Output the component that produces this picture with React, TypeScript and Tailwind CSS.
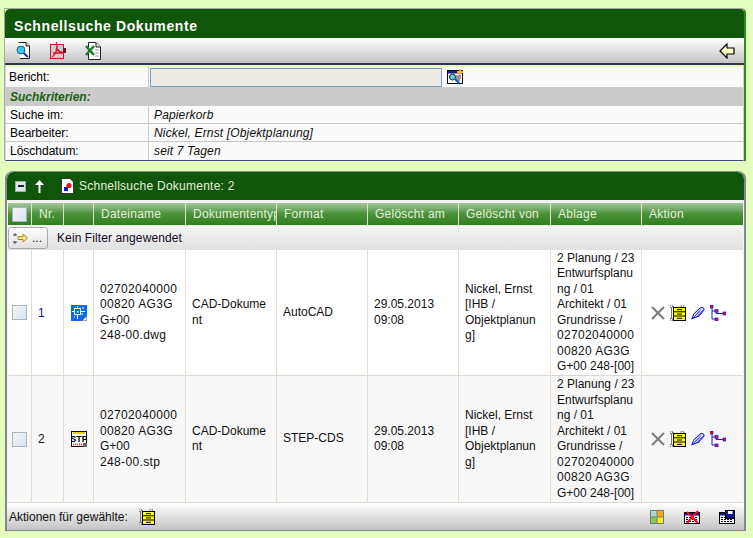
import React from "react";

const gridCols =
  "grid grid-cols-[24px_32px_30px_92px_91px_91px_91px_92px_91px_101px]";

const IconSearchDoc = () => (
  <svg width="17" height="17" viewBox="0 0 17 17">
    <path d="M3.5 .5H11L14.5 4V16.5H5" fill="#fff" stroke="#222" />
    <path d="M11 .5V4H14.5" fill="#ddd" stroke="#222" />
    <circle cx="6" cy="8" r="4" fill="#3cc8e8" stroke="#1a5ea8" />
    <path d="M8.5 11L13 15" stroke="#1a3aa8" strokeWidth="2" />
  </svg>
);

const IconPdf = () => (
  <svg width="17" height="17" viewBox="0 0 17 17">
    <rect x=".5" y="2.5" width="13" height="14" fill="#d9c8c8" stroke="#c8162a" />
    <path d="M6.5 0V2M7 3C7 9 5 13 2 15M7 7C9 10 12 11 15 10M3 11H13" fill="none" stroke="#e01030" strokeWidth="1.4" />
    <rect x="13" y="6" width="3" height="5" fill="#7a1020" />
  </svg>
);

const IconExcel = () => (
  <svg width="17" height="18" viewBox="0 0 17 18">
    <path d="M3.5 .5H11L15.5 5V17.5H3.5Z" fill="#fff" stroke="#222" />
    <path d="M11 .5V5H15.5" fill="#ddd" stroke="#222" />
    <path d="M1 4L9 13M9 4L1 13" stroke="#1f7a2e" strokeWidth="2.6" />
    <path d="M10 8H14M10 11H14M10 14H14" stroke="#999" />
  </svg>
);

const IconBack = () => (
  <svg width="16" height="16" viewBox="0 0 16 16">
    <path d="M1 8L8 1V5H15V11H8V15Z" fill="#ffffc8" stroke="#000" strokeWidth="1.2" />
  </svg>
);

const IconReportSearch = () => (
  <svg width="17" height="16" viewBox="0 0 17 16">
    <rect x=".5" y="1.5" width="15" height="13" fill="#fff" stroke="#111" />
    <rect x="1" y="2" width="14" height="2.5" fill="#1a1a9a" />
    <path d="M9 7H14M9 9H14M9 11H13" stroke="#333" />
    <circle cx="5.5" cy="8" r="3" fill="#58d8e8" stroke="#222" />
    <path d="M8 10L13 15" stroke="#1a56c8" strokeWidth="2" />
    <path d="M13 0V6M10 3H16" stroke="#f5b51e" strokeWidth="2" />
  </svg>
);

const IconDocSmall = () => (
  <svg width="13" height="16" viewBox="0 0 13 16">
    <path d="M.5 .5H9L12.5 4V15.5H.5Z" fill="#fff" stroke="#333" />
    <rect x="3" y="9" width="4" height="4" fill="#1212d8" />
    <circle cx="8" cy="7.5" r="2.6" fill="#e01818" />
  </svg>
);

const IconFilterArrows = () => (
  <svg width="15" height="11" viewBox="0 0 15 11">
    <path d="M0 2H4M0 9H4M2 0V3M2 8V11" stroke="#445" />
    <path d="M5 3.5H10V1L14.5 5L10 9V6.500H5Z" fill="#f8e8a0" stroke="#c08410" />
  </svg>
);

const IconCad = () => (
  <svg width="16" height="16" viewBox="0 0 16 16">
    <rect width="16" height="16" fill="#0a6af0" />
    <path d="M1 6.500H14M6.500 1V14" stroke="#fff" />
    <rect x="3.500" y="3.500" width="6" height="6" fill="#0a6af0" stroke="#fff" />
    <rect x="6" y="6" width="1.500" height="1.500" fill="#fff" />
    <path d="M11 3H13M3 12H4M11 8V10" stroke="#fff" />
    <path d="M10.500 16L16 10.500V16Z" fill="#fff" stroke="#555" />
  </svg>
);

const IconStp = () => (
  <svg width="16" height="16" viewBox="0 0 16 16">
    <rect x=".5" y=".5" width="15" height="15" fill="#fff" stroke="#111" />
    <path d="M2 2H14" stroke="#e8d020" strokeWidth="2" />
    <text x="8" y="11" textAnchor="middle" fontSize="9" fontWeight="bold" fontFamily="Liberation Sans" fill="#000">
      STP
    </text>
    <path d="M2 13.500H11" stroke="#e83020" strokeWidth="2" strokeDasharray="1 1" />
    <rect x="12" y="12" width="4" height="4" fill="#666" />
  </svg>
);

const IconDelete = () => (
  <svg width="14" height="14" viewBox="0 0 14 14">
    <path d="M1 1L13 13M13 1L1 13" stroke="#808080" strokeWidth="2.2" />
  </svg>
);

const IconArchive = () => (
  <svg width="16" height="16" viewBox="0 0 16 16">
    <path d="M1.500 1.500V15M1.500 1.500H4M1.500 14.500H4M11 1.500H13" stroke="#777" fill="none" />
    <rect x="0" y="0" width="2.500" height="2.500" fill="#fff" stroke="#777" strokeWidth=".8" />
    <rect x="0" y="13.500" width="2.500" height="2.500" fill="#fff" stroke="#777" strokeWidth=".8" />
    <rect x="11" y="0" width="2.500" height="2.500" fill="#fff" stroke="#777" strokeWidth=".8" />
    <rect x="3.500" y="2.500" width="12" height="13" fill="#ffff30" stroke="#000" />
    <path d="M3.500 6.800H15.500M3.500 11H15.500M7 4.700H12M7 9H12M7 13.300H12" stroke="#000" />
  </svg>
);

const IconEdit = () => (
  <svg width="14" height="14" viewBox="0 0 15 14">
    <path d="M1 13L3 8L10 1.500C12 .5 14 1.500 14 3.500L8 10.500Z" fill="#fff" stroke="#1212d8" strokeWidth="1.1" />
    <path d="M1 13L10 5M4 10L11 3M6 11L13 4" stroke="#1212d8" strokeWidth=".8" />
  </svg>
);

const IconTree = () => (
  <svg width="16" height="16" viewBox="0 0 16 16">
    <path d="M2 2V14H6M2 6H6M6 8.500H13" fill="none" stroke="#1a1ae0" strokeWidth="1" />
    <rect x="0" y="0" width="3" height="3" fill="#e01030" stroke="#1a1ae0" strokeWidth=".7" />
    <rect x="5" y="4.500" width="3" height="3" fill="#e01030" stroke="#1a1ae0" strokeWidth=".7" />
    <rect x="13" y="7" width="3" height="3" fill="#e01030" stroke="#1a1ae0" strokeWidth=".7" />
    <rect x="5" y="13" width="3" height="3" fill="#e01030" stroke="#1a1ae0" strokeWidth=".7" />
  </svg>
);

const IconColors = () => (
  <svg width="14" height="14" viewBox="0 0 14 14">
    <rect width="14" height="14" fill="#6f7f70" />
    <rect x="1" y="1" width="5.500" height="5.500" fill="#a9d8d8" />
    <rect x="7.500" y="1" width="5.500" height="5.500" fill="#f5a810" />
    <rect x="1" y="7.500" width="5.500" height="5.500" fill="#8cc850" />
    <rect x="7.500" y="7.500" width="5.500" height="5.500" fill="#ffee10" />
  </svg>
);

const IconTableBase = () => (
  <>
    <rect x=".5" y="2.500" width="15" height="11" fill="#fff" stroke="#000" />
    <rect x="1" y="3" width="14" height="2.500" fill="#10108a" />
    <path d="M2 7.500H14M2 9.500H14M2 11.500H14" stroke="#000" strokeDasharray="2 1" />
  </>
);

const IconTableOff = () => (
  <svg width="16" height="14" viewBox="0 0 16 14">
    <IconTableBase />
    <path d="M3 13L14 1M3 2L14 13" stroke="#f01020" strokeWidth="2" />
  </svg>
);

const IconTableSave = () => (
  <svg width="16" height="14" viewBox="0 0 16 14">
    <IconTableBase />
    <rect x="6.500" y=".5" width="9" height="8" fill="#10108a" stroke="#000" />
    <rect x="9" y="1" width="4.500" height="3" fill="#fff" />
  </svg>
);

const Checkbox = () => (
  <span className="block h-[15px] w-[15px] border border-[#aeb4bc] bg-gradient-to-br from-[#f4f6f8] to-[#d6e2f0]" />
);

const FormRow = ({ label, value }: { label: string; value: string }) => (
  <div className="flex h-[18px] items-center border-b border-[#c8c8c8] last:border-b-0 bg-[#fafafa]">
    <div className="flex h-full w-[143px] items-center border-r border-[#c8c8c8] pl-[4px] text-black">
      {label}
    </div>
    <div className="pl-[5px] italic tracking-[.15px] text-[#111]">{value}</div>
  </div>
);

const HeaderCell = ({ children }: { children?: React.ReactNode }) => (
  <div className="flex items-center overflow-hidden whitespace-nowrap border-r border-[#e4dcc8] pl-[7px] tracking-[.25px] text-[#e4efdc] last:border-r-0">
    {children}
  </div>
);

const Cell = ({ children }: { children?: React.ReactNode }) => (
  <div className="flex items-center border-r border-[#e6dccf] pl-[6px] pr-[2px] text-[#111] last:border-r-0">
    <div className="min-w-0 leading-[15.5px]">{children}</div>
  </div>
);

// digit runs are a bit wider in the original
const Digits = ({ children }: { children: React.ReactNode }) => (
  <span className="tracking-[.35px]">{children}</span>
);

type DocRow = {
  nr: number;
  icon: React.ReactNode;
  file: string;
  format: string;
  striped: boolean;
  nrColor: string;
  height: string;
};

const rows: DocRow[] = [
  { nr: 1, icon: <IconCad />, file: "248-00.dwg", format: "AutoCAD", striped: false, nrColor: "text-[#10106a]", height: "h-[126px]" },
  { nr: 2, icon: <IconStp />, file: "248-00.stp", format: "STEP-CDS", striped: true, nrColor: "text-[#111]", height: "h-[127px]" },
];

export default function App() {
  return (
    <div className="h-[538px] w-[753px] overflow-hidden bg-[#e3fdbe] pl-[5px] pt-[9px] text-[12px] font-['Liberation_Sans',Arial,sans-serif]">
      <div className="w-[741px] rounded-tr-[4px] border-r-[2px] border-[#2f8a14] shadow-[-1px_-1px_0_#a9a9a0]">
        <div className="flex h-[29px] items-center rounded-tl-[5px] rounded-tr-[4px] bg-[#10560a] pl-[9px] pt-[5px] text-[14px] font-bold tracking-[.6px] text-white">
          Schnellsuche Dokumente
        </div>
        <div className="flex h-[27px] items-center gap-[18px] border-b-[2px] border-[#33334a] bg-gradient-to-b from-white to-[#c4c4c4] pl-[10px] pr-[9px]">
          <IconSearchDoc />
          <IconPdf />
          <IconExcel />
          <div className="ml-auto">
            <IconBack />
          </div>
        </div>
        <div className="border-x border-b border-[#d0d0d8] border-b-[#3c4a80] pt-[2px]">
          <div className="flex h-[20px] items-center bg-[#fafafa]">
            <div className="flex h-full w-[143px] items-center border-r border-[#c8c8c8] pl-[3px]">
              Bericht:
            </div>
            <div className="ml-px h-[19px] w-[292px] border border-[#7c9fc4] bg-[#ecece4]" />
            <div className="ml-[5px]">
              <IconReportSearch />
            </div>
          </div>
          <div className="flex h-[19px] items-center bg-[#cbcbcb] pl-[4px] font-bold italic text-[#1c6014]">
            Suchkriterien:
          </div>
          <FormRow label="Suche im:" value="Papierkorb" />
          <FormRow label="Bearbeiter:" value="Nickel, Ernst [Objektplanung]" />
          <FormRow label="Löschdatum:" value="seit 7 Tagen" />
        </div>
      </div>

      <div className="mt-[11px] w-[741px] rounded-t-[8px] border-b border-r-[2px] border-l-[2px] border-[#84888a] bg-[#f2f2f2] shadow-[0_-1px_0_#8a8f86]">
        <div className="flex h-[28px] items-center rounded-t-[7px] bg-[#10560a] pl-[8px] text-[#e4efdc]">
          <span className="flex h-[11px] w-[11px] items-center justify-center border border-[#9ab0a0] bg-[#e0e8f0]">
            <span className="h-[1.500px] w-[6px] bg-[#223]" />
          </span>
          <svg className="ml-[8px]" width="11" height="13" viewBox="0 0 11 13">
            <path d="M5.500 0L10 5H6.500V13H4.500V5H1Z" fill="#fff" />
          </svg>
          <span className="ml-[16px]">
            <IconDocSmall />
          </span>
          <span className="ml-[5px] tracking-[.25px]">Schnellsuche Dokumente: 2</span>
        </div>

        <div className="pl-px pr-px pt-[2px]">
          <div className={`${gridCols} h-[24px] border-y border-[#f0f4ea] bg-gradient-to-b from-[#a4c8a0] via-[#4a9238] to-[#2f7f1c]`}>
            <div className="flex items-center justify-center border-r border-[#e4dcc8]">
              <Checkbox />
            </div>
            <HeaderCell>Nr.</HeaderCell>
            <HeaderCell />
            <HeaderCell>Dateiname</HeaderCell>
            <HeaderCell>Dokumententyp</HeaderCell>
            <HeaderCell>Format</HeaderCell>
            <HeaderCell>Gelöscht am</HeaderCell>
            <HeaderCell>Gelöscht von</HeaderCell>
            <HeaderCell>Ablage</HeaderCell>
            <HeaderCell>Aktion</HeaderCell>
          </div>

          <div className="flex h-[24px] items-center bg-gradient-to-b from-[#f6f6f6] to-[#e0e0e0]">
            <button className="flex h-[22px] w-[40px] items-center gap-[4px] rounded-[3px] border border-[#aaaaaa] bg-gradient-to-b from-white to-[#e0e0e0] pl-[4px] text-[12px] leading-none">
              <IconFilterArrows />
              <span className="text-[#222]">...</span>
            </button>
            <span className="ml-[9px] tracking-[.1px] text-[#11081e]">Kein Filter angewendet</span>
          </div>

          {rows.map((r) => (
            <div
              key={r.nr}
              className={`${gridCols} ${r.height} border-b border-[#ddd8d0] ${r.striped ? "bg-[#f7f7f7]" : "bg-white"}`}
            >
              <div className="flex items-center justify-center border-r border-[#e6dccf]">
                <Checkbox />
              </div>
              <div className={`flex items-center border-r border-[#e6dccf] pl-[6px] ${r.nrColor}`}>{r.nr}</div>
              <div className="flex items-center justify-center border-r border-[#e6dccf]">{r.icon}</div>
              <Cell>
                <Digits>02702040000</Digits>
                <br />
                <Digits>00820 AG3G</Digits>
                <br />
                G+00
                <br />
                <Digits>{r.file}</Digits>
              </Cell>
              <Cell>
                CAD-Dokume
                <br />
                nt
              </Cell>
              <Cell>{r.format}</Cell>
              <Cell>
                29.05.2013
                <br />
                09:08
              </Cell>
              <Cell>
                Nickel, Ernst
                <br />
                [IHB /
                <br />
                Objektplanun
                <br />g]
              </Cell>
              <Cell>
                2 Planung / 23
                <br />
                Entwurfsplanu
                <br />
                ng / 01
                <br />
                Architekt / 01
                <br />
                Grundrisse /
                <br />
                <Digits>02702040000</Digits>
                <br />
                <Digits>00820 AG3G</Digits>
                <br />
                G+00 248-[00]
              </Cell>
              <div className="flex items-center gap-[5px] pl-[9px]">
                <IconDelete />
                <IconArchive />
                <IconEdit />
                <IconTree />
              </div>
            </div>
          ))}
        </div>

        <div className="flex h-[27px] items-center bg-gradient-to-b from-white to-[#c4c4c4] pl-[2px] pr-[9px] text-[#111]">
          <span>Aktionen für gewählte:</span>
          <span className="ml-[11px]">
            <IconArchive />
          </span>
          <span className="ml-auto flex items-center gap-[19px]">
            <span className="mr-px">
              <IconColors />
            </span>
            <IconTableOff />
            <IconTableSave />
          </span>
        </div>
      </div>
    </div>
  );
}
